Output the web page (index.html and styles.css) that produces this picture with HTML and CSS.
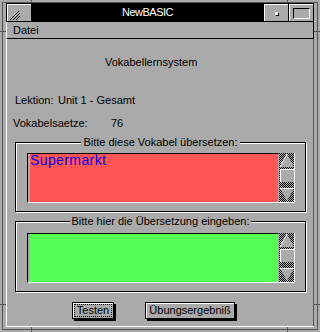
FILE: index.html
```html
<!DOCTYPE html>
<html lang="de">
<head>
  <meta charset="UTF-8">
  <title>NewBASIC</title>
  <link rel="stylesheet" href="styles.css">
</head>
<body>
  <div class="window">
    <!-- Rahmen-Markierungen an den Ecken -->
    <svg class="frame-marks" width="320" height="332" viewBox="0 0 320 332">
      <g stroke="#555" stroke-width="1">
        <line x1="31.5" y1="0" x2="31.5" y2="3"></line>
        <line x1="287.5" y1="0" x2="287.5" y2="3"></line>
        <line x1="31.5" y1="327" x2="31.5" y2="332"></line>
        <line x1="287.5" y1="327" x2="287.5" y2="332"></line>
        <line x1="0" y1="31.5" x2="6" y2="31.5"></line>
        <line x1="0" y1="304.5" x2="6" y2="304.5"></line>
        <line x1="314" y1="31.5" x2="320" y2="31.5"></line>
        <line x1="314" y1="304.5" x2="320" y2="304.5"></line>
      </g>
    </svg>

    <div class="titlebar">
      <div class="tb-box">
        <svg width="23" height="16" viewBox="0 0 23 16" stroke="#000" stroke-width="1">
          <line x1="2" y1="15" x2="11" y2="6"></line>
          <line x1="5" y1="15" x2="12" y2="8"></line>
          <line x1="8" y1="15" x2="12" y2="11"></line>
        </svg>
      </div>
      <div class="tb-title">NewBASIC</div>
      <div class="tb-box"><span class="min-dot"></span></div>
      <div class="tb-box"><span class="max-rect"></span></div>
    </div>

    <div class="menubar">Datei</div>

    <div class="content">
      <div class="heading">Vokabellernsystem</div>

      <div class="lesson">
        <span class="lesson-key">Lektion:</span>
        <span>Unit 1 - Gesamt</span>
      </div>

      <div class="count">
        <span class="count-key">Vokabelsaetze:</span>
        <span>76</span>
      </div>

      <div class="group">
        <div class="group-label">Bitte diese Vokabel übersetzen:</div>
        <div class="field">
          <div class="textbox red">Supermarkt</div>
          <svg class="scroll" width="16" height="50" viewBox="0 0 16 50">
            <defs>
              <pattern id="dither" width="2" height="2" patternUnits="userSpaceOnUse">
                <rect width="2" height="2" fill="#aaa"></rect>
                <rect width="1" height="1" fill="#000"></rect>
                <rect x="1" y="1" width="1" height="1" fill="#000"></rect>
              </pattern>
            </defs>
            <rect width="16" height="50" fill="url(#dither)"></rect>
            <polygon points="8,1 15,14 1,14" fill="#aaa"></polygon>
            <polyline points="1,14 8,1" fill="none" stroke="#fff"></polyline>
            <rect x="1" y="16" width="14" height="13" fill="#aaa"></rect>
            <polyline points="1.5,29 1.5,16.5 15,16.5" fill="none" stroke="#fff"></polyline>
            <polygon points="1,35 15,35 8,48" fill="#aaa"></polygon>
            <polyline points="1,35.5 15,35.5" fill="none" stroke="#fff"></polyline>
            <polyline points="15.5,0 15.5,49.5 0,49.5" fill="none" stroke="#fff"></polyline>
          </svg>
        </div>
      </div>

      <div class="group second">
        <div class="group-label">Bitte hier die Übersetzung eingeben:</div>
        <div class="field">
          <div class="textbox green"></div>
          <svg class="scroll" width="16" height="50" viewBox="0 0 16 50">
            <rect width="16" height="50" fill="url(#dither)"></rect>
            <polygon points="8,1 15,14 1,14" fill="#aaa"></polygon>
            <polyline points="1,14 8,1" fill="none" stroke="#fff"></polyline>
            <rect x="1" y="16" width="14" height="13" fill="#aaa"></rect>
            <polyline points="1.5,29 1.5,16.5 15,16.5" fill="none" stroke="#fff"></polyline>
            <polygon points="1,35 15,35 8,48" fill="#aaa"></polygon>
            <polyline points="1,35.5 15,35.5" fill="none" stroke="#fff"></polyline>
            <polyline points="15.5,0 15.5,49.5 0,49.5" fill="none" stroke="#fff"></polyline>
          </svg>
        </div>
      </div>

      <div class="buttons">
        <div class="btn btn-test"><span class="focus">Testen</span></div>
        <div class="btn btn-result">Übungsergebniß</div>
      </div>
    </div>
  </div>
</body>
</html>
```

FILE: styles.css
```css
* {
  box-sizing: border-box;
}
body {
  margin: 0;
  width: 320px;
  height: 332px;
  overflow: hidden;
  background: #aaa;
  font-family: "Liberation Sans", Arial, sans-serif;
  font-size: 11px;
  color: #000;
}
.window {
  position: relative;
  width: 320px;
  height: 332px;
  padding: 3px 6px 5px 6px;
  display: flex;
  flex-direction: column;
  background: #aaa;
  box-shadow: inset 0 0 0 2px #aaa, inset 0 0 0 3px #555;
}
.frame-marks {
  position: absolute;
  left: 0;
  top: 0;
  pointer-events: none;
}

/* Titelleiste */
.titlebar {
  display: flex;
  gap: 1px;
  padding: 1px;
  height: 19px;
  background: #000;
}
.tb-box {
  width: 24px;
  background: #aaa;
  border-top: 1px solid #fff;
  border-left: 1px solid #fff;
  display: flex;
  align-items: center;
  justify-content: center;
}
.tb-title {
  flex: 1;
  color: #fff;
  text-align: center;
  line-height: 17px;
  letter-spacing: -0.5px;
}
.min-dot {
  width: 3px;
  height: 3px;
  background: #fff;
  box-shadow: 1px 1px 0 #000;
}
.max-rect {
  width: 17px;
  height: 11px;
  border-top: 1px solid #000;
  border-left: 1px solid #000;
  border-bottom: 1px solid #fff;
  border-right: 1px solid #fff;
}

/* Menü */
.menubar {
  height: 17px;
  padding-left: 6px;
  line-height: 16px;
  border-left: 1px solid #fff;
  border-right: 1px solid #000;
  border-bottom: 1px solid #000;
}

/* Inhalt */
.content {
  flex: 1;
  display: flex;
  flex-direction: column;
  border-left: 1px solid #fff;
  border-right: 1px solid #555;
  border-bottom: 1px solid #fff;
  line-height: 13px;
}
.heading {
  margin-top: 17px;
  padding-left: 98px;
}
.lesson {
  margin-top: 25px;
  padding-left: 8px;
  display: flex;
}
.lesson-key {
  width: 43px;
}
.count {
  margin-top: 10px;
  padding-left: 6px;
  display: flex;
}
.count-key {
  width: 98px;
}

/* Gruppenrahmen */
.group {
  margin: 12px 7px 0 8px;
  border: 1px solid #000;
  box-shadow: inset 1px 1px 0 #fff, 1px 1px 0 #fff;
  display: flex;
  flex-direction: column;
  align-items: center;
}
.group.second {
  margin-top: 9px;
}
.group-label {
  margin-top: -7px;
  padding: 0 2px;
  background: #aaa;
}
.field {
  align-self: stretch;
  display: flex;
  height: 50px;
  margin: 4px 10px 8px 11px;
}
.second .field {
  margin-top: 5px;
}
.textbox {
  flex: 1;
  padding-left: 2px;
  border-top: 1px solid #000;
  border-left: 1px solid #000;
  border-bottom: 1px solid #fff;
  border-right: 1px solid #aaa;
  background-clip: content-box;
  font-size: 14px;
  line-height: 13px;
  letter-spacing: 0.4px;
  color: #0000e0;
}
.red {
  background-color: #ff5555;
}
.green {
  background-color: #55ff55;
}
.scroll {
  flex: none;
  display: block;
}

/* Schaltflächen */
.buttons {
  margin-top: 10px;
  padding-left: 65px;
  display: flex;
  gap: 31px;
}
.btn {
  height: 17px;
  padding: 1px;
  border: 1px solid #000;
  box-shadow: inset 1px 1px 0 #fff, 2px 2px 0 #000;
  background: #aaa;
  display: flex;
  align-items: center;
  justify-content: center;
  line-height: 13px;
}
.btn-test {
  width: 42px;
}
.btn-result {
  width: 90px;
}
.focus {
  flex: 1;
  align-self: stretch;
  display: flex;
  align-items: center;
  justify-content: center;
  border: 1px dotted #000;
}
```
